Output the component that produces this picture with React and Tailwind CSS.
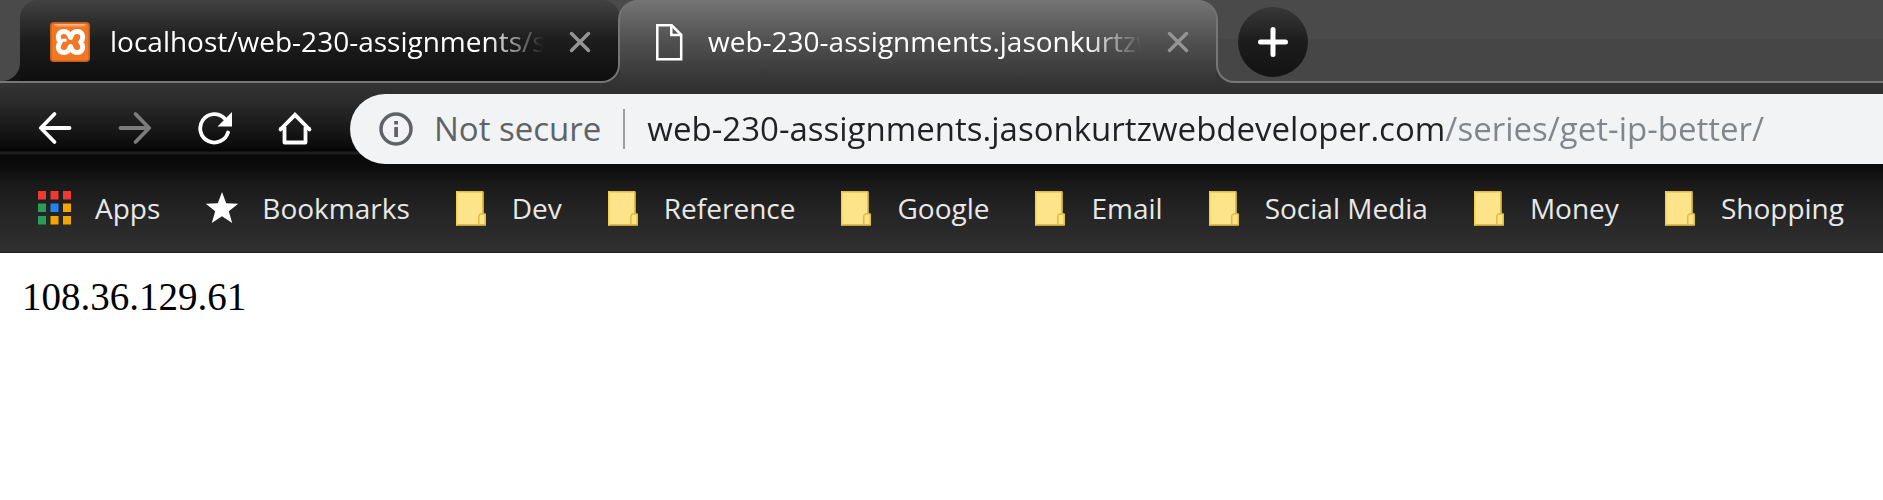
import { useState } from "react";

const ACTIVE_TITLE = "web-230-assignments.jasonkurtzwebdeveloper.com";
const PAGE_URL = "web-230-assignments.jasonkurtzwebdeveloper.com/series/get-ip-better/";
const FOLDERS = ["Dev", "Reference", "Google", "Email", "Social Media", "Money", "Shopping"];

function XamppIcon() {
  return (
    <svg className="size-10 shrink-0" viewBox="0 0 40 40" aria-hidden="true">
      <defs>
        <linearGradient id="xampp-gloss" x1="0" y1="0" x2="0" y2="1">
          <stop offset="0" stopColor="#fff" stopOpacity="0.55" />
          <stop offset="1" stopColor="#fff" stopOpacity="0.1" />
        </linearGradient>
      </defs>
      <rect x="0.75" y="0.75" width="38.5" height="38.5" rx="3" fill="#f37623" stroke="#c0601f" strokeWidth="1.5" />
      <path d="M4 2h32l-2 3H6z" fill="url(#xampp-gloss)" />
      <path
        d="M20.5 15.500C19.200 11.200 17 9.500 14 9.500C10.500 9.500 8.300 11.500 8.300 14.700C8.300 17 9 18.700 10.300 20C9 21.300 8.300 23 8.300 25.300C8.300 28.500 10.500 30.500 14 30.500C17 30.500 19.200 28.800 20.500 24.500C21.800 28.800 24 30.500 27 30.500C30.500 30.500 32.700 28.500 32.700 25.300C32.700 23 32 21.300 30.700 20C32 18.700 32.700 17 32.700 14.700C32.700 11.500 30.500 9.500 27 9.500C24 9.500 21.800 11.200 20.500 15.500z"
        fill="none"
        stroke="#fff"
        strokeWidth="5"
        strokeLinejoin="round"
      />
      <path d="M11.500 18.200h5" stroke="#fff" strokeWidth="3" />
    </svg>
  );
}

function FileIcon() {
  return (
    <svg className="size-10 shrink-0" viewBox="0 0 40 40" fill="none" stroke="#fff" strokeWidth="2.500" aria-hidden="true">
      <path d="M9.300 3.300h14.400l9.500 9.500v24.400H9.300z" />
      <path d="M23.300 3.500v9.500h9.700" />
    </svg>
  );
}

function CloseIcon() {
  return (
    <svg className="size-6" viewBox="0 0 24 24" fill="none" stroke="#949494" strokeWidth="3.500" strokeLinecap="round" aria-hidden="true">
      <path d="M3.500 3.500l17 17M20.500 3.500l-17 17" />
    </svg>
  );
}

function PlusIcon() {
  return (
    <svg className="size-8" viewBox="0 0 32 32" fill="none" stroke="#fff" strokeWidth="5" strokeLinecap="round" aria-hidden="true">
      <path d="M16 3.500v25M3.500 16h25" />
    </svg>
  );
}

function ArrowIcon({ className }) {
  return (
    <svg className={className} viewBox="0 0 36 36" fill="none" stroke="currentColor" strokeWidth="3.800" strokeLinecap="round" strokeLinejoin="round" aria-hidden="true">
      <path d="M32.500 18H4M17.500 4L3.800 18l13.700 14" />
    </svg>
  );
}

function ReloadIcon() {
  return (
    <svg className="size-9" viewBox="0 0 36 36" aria-hidden="true">
      <path d="M31 22.500A14.200 14.200 0 1 1 27.500 8.300" fill="none" stroke="#fff" strokeWidth="3.800" strokeLinecap="round" />
      <path d="M35 2v14.500H20.500z" fill="#fff" />
    </svg>
  );
}

function HomeIcon() {
  return (
    <svg className="size-9" viewBox="0 0 36 36" fill="none" stroke="#fff" strokeWidth="3.800" aria-hidden="true">
      <path d="M3.500 19.500L18 4.800l14.500 14.700" strokeLinecap="round" />
      <path d="M7.500 17v15.500h21V17" strokeLinejoin="round" />
      <path d="M2.500 18.500h5M28.500 18.500h5" strokeWidth="3" />
    </svg>
  );
}

function InfoIcon() {
  return (
    <svg className="size-9 shrink-0" viewBox="0 0 36 36" aria-hidden="true">
      <circle cx="18" cy="18" r="15" fill="none" stroke="#5f6368" strokeWidth="3.500" />
      <path d="M16.200 16h3.800v10h-3.800zM16.200 10h3.800v3.500h-3.800z" fill="#5f6368" />
    </svg>
  );
}

function AppsIcon() {
  const colours = ["#f0392f", "#f0392f", "#f0392f", "#2a9d58", "#2383f0", "#f4a500", "#2a9d58", "#f4a500", "#f4a500"];
  return (
    <svg className="size-9 shrink-0" viewBox="0 0 36 36" aria-hidden="true">
      {colours.map((c, i) => (
        <rect key={i} x={1 + (i % 3) * 12.5} y={1 + Math.floor(i / 3) * 12.5} width="8" height="8.5" fill={c} />
      ))}
    </svg>
  );
}

function StarIcon() {
  return (
    <svg className="size-9 shrink-0" viewBox="0 0 36 36" aria-hidden="true">
      <path d="M18 2l4.200 11.200 12 .6-9.400 7.400L28.200 33 18 26.300 7.800 33l3.400-11.800-9.400-7.400 12-.6z" fill="#fff" />
    </svg>
  );
}

function FolderIcon() {
  return (
    <svg className="size-9 shrink-0" viewBox="0 0 36 36" aria-hidden="true">
      <path d="M2 1h26.500a1 1 0 0 1 1 1V23.500h1.500a1 1 0 0 1 1 1v10a1 1 0 0 1-1 1H2z" fill="#fde48b" />
      <path d="M2.800 1.800h25a1 1 0 0 1 1 1V24h1.400a1 1 0 0 1 1 1v9.700H2.800M28.800 24c-2.500-.5-4 .5-4 2.500v8" fill="none" stroke="#e0bd3c" strokeWidth="1.500" />
      <path d="M2.800 1.500v34" stroke="#f5cf4a" strokeWidth="1.500" />
    </svg>
  );
}

function TabTitle({ children }) {
  return (
    <span className="min-w-0 flex-1 overflow-hidden pb-0.5 whitespace-nowrap text-[28px] leading-9 text-white [mask-image:linear-gradient(to_right,black_calc(100%-60px),transparent_calc(100%-4px))]">
      {children}
    </span>
  );
}

function TabStrip() {
  return (
    <div className="flex h-[83px] bg-[linear-gradient(#4a4a4a_50%,#343434_50%)]" role="tablist">
      <div className="w-5 shrink-0 border-b-2 border-[#767676] bg-[linear-gradient(#4a4a4a_50%,#131313_50%)]">
        <div className="h-full rounded-br-[18px] bg-[#4a4a4a]" />
      </div>
      <div className="relative flex w-[600px] min-w-0 items-center rounded-t-[18px] rounded-br-[18px] bg-[linear-gradient(#424242,#1c1c1c_50%,#0e0e0e)] pr-7 pl-[30px]">
        <button type="button" role="tab" aria-selected="false" className="flex min-w-0 flex-1 items-center gap-5 text-left">
          <XamppIcon />
          <TabTitle>localhost/web-230-assignments/series</TabTitle>
        </button>
        <button type="button" aria-label="Close tab" className="ml-5 shrink-0">
          <CloseIcon />
        </button>
        <div className="pointer-events-none absolute inset-x-0 bottom-0 h-12 rounded-br-[18px] border-r-2 border-b-2 border-[#767676]" />
      </div>
      <div className="relative flex w-[596px] min-w-0 items-center rounded-t-[18px] bg-[linear-gradient(#757575,#505050_50%,#343434)] pr-[26px] pl-7">
        <button type="button" role="tab" aria-selected="true" className="flex min-w-0 flex-1 items-center gap-5 text-left">
          <FileIcon />
          <TabTitle>{ACTIVE_TITLE}</TabTitle>
        </button>
        <button type="button" aria-label="Close tab" className="ml-5 shrink-0">
          <CloseIcon />
        </button>
        <div className="pointer-events-none absolute -inset-x-0.5 top-0 h-[62px] rounded-t-[20px] border-x-2 border-[#767676]" />
      </div>
      <div className="flex flex-1 flex-col bg-[linear-gradient(#4a4a4a_50%,#343434_50%)]">
        <div className="h-10 bg-[#4a4a4a]" />
        <div className="-mt-px h-11 rounded-bl-[18px] border-b-2 border-l-2 border-[#767676] bg-[#464646]" />
        <button type="button" aria-label="New tab" className="absolute top-[7px] ml-[22px] grid size-[70px] place-items-center rounded-full bg-[linear-gradient(#383838,#1c1c1c_50%,#131313)]">
          <PlusIcon />
        </button>
      </div>
    </div>
  );
}

function Toolbar() {
  const [url, setUrl] = useState(PAGE_URL);
  return (
    <div className="flex items-center pt-[11px] pl-[37px]">
      <nav className="flex shrink-0 items-center gap-11 pr-[37px] pb-0.5" aria-label="Navigation">
        <button type="button" aria-label="Back" className="text-white">
          <ArrowIcon className="size-9" />
        </button>
        <button type="button" aria-label="Forward" className="text-[#7c7c7c]">
          <ArrowIcon className="size-9 rotate-180" />
        </button>
        <button type="button" aria-label="Reload">
          <ReloadIcon />
        </button>
        <button type="button" aria-label="Home">
          <HomeIcon />
        </button>
      </nav>
      <div className="flex h-[70px] min-w-0 flex-1 items-center rounded-l-full bg-[#f1f3f4] pl-7">
        <button type="button" className="flex shrink-0 items-center gap-5 text-[33px] leading-10 text-[#5f6368]">
          <InfoIcon />
          Not secure
        </button>
        <div className="ml-[22px] h-10 w-0.5 shrink-0 bg-[#9b9da0]" />
        <input
          type="text"
          aria-label="Address"
          value={url}
          onChange={(e) => setUrl(e.target.value)}
          className="ml-[22px] h-12 min-w-0 flex-1 bg-[linear-gradient(to_right,#202124_799px,#80868b_799px)] bg-clip-text text-[33px] text-transparent caret-black outline-none"
        />
      </div>
    </div>
  );
}

function Bookmark({ icon, label }) {
  return (
    <a href="#" className="flex shrink-0 items-center gap-[22px] text-[28px] leading-9 text-[#e8e8e8]">
      {icon}
      {label}
    </a>
  );
}

export default function App() {
  return (
    <div className="min-h-screen overflow-hidden bg-white font-['Open_Sans','Noto_Sans',sans-serif]">
      <header>
        <TabStrip />
        <div className="bg-[linear-gradient(#343434,#2a2a2a_20px,#181818_46px,#0a0a0a_64px,#040404_68px,#1e1e1e_69px,#1e1e1e_71px,#080808_72px,#0c0c0c_84px,#191919_100px,#232323_126px,#303030_168px,#1c1c1c_170px)]">
          <Toolbar />
          <nav className="flex h-[89px] items-center gap-11 pb-0.5 pl-[37px]" aria-label="Bookmarks bar">
            <Bookmark icon={<AppsIcon />} label="Apps" />
            <Bookmark icon={<StarIcon />} label="Bookmarks" />
            {FOLDERS.map((name) => (
              <Bookmark key={name} icon={<FolderIcon />} label={name} />
            ))}
          </nav>
        </div>
      </header>
      <main className="px-[22px] py-5">
        <p className="font-['Liberation_Serif',serif] text-[39px] leading-[48px] text-black">108.36.129.61</p>
      </main>
    </div>
  );
}
